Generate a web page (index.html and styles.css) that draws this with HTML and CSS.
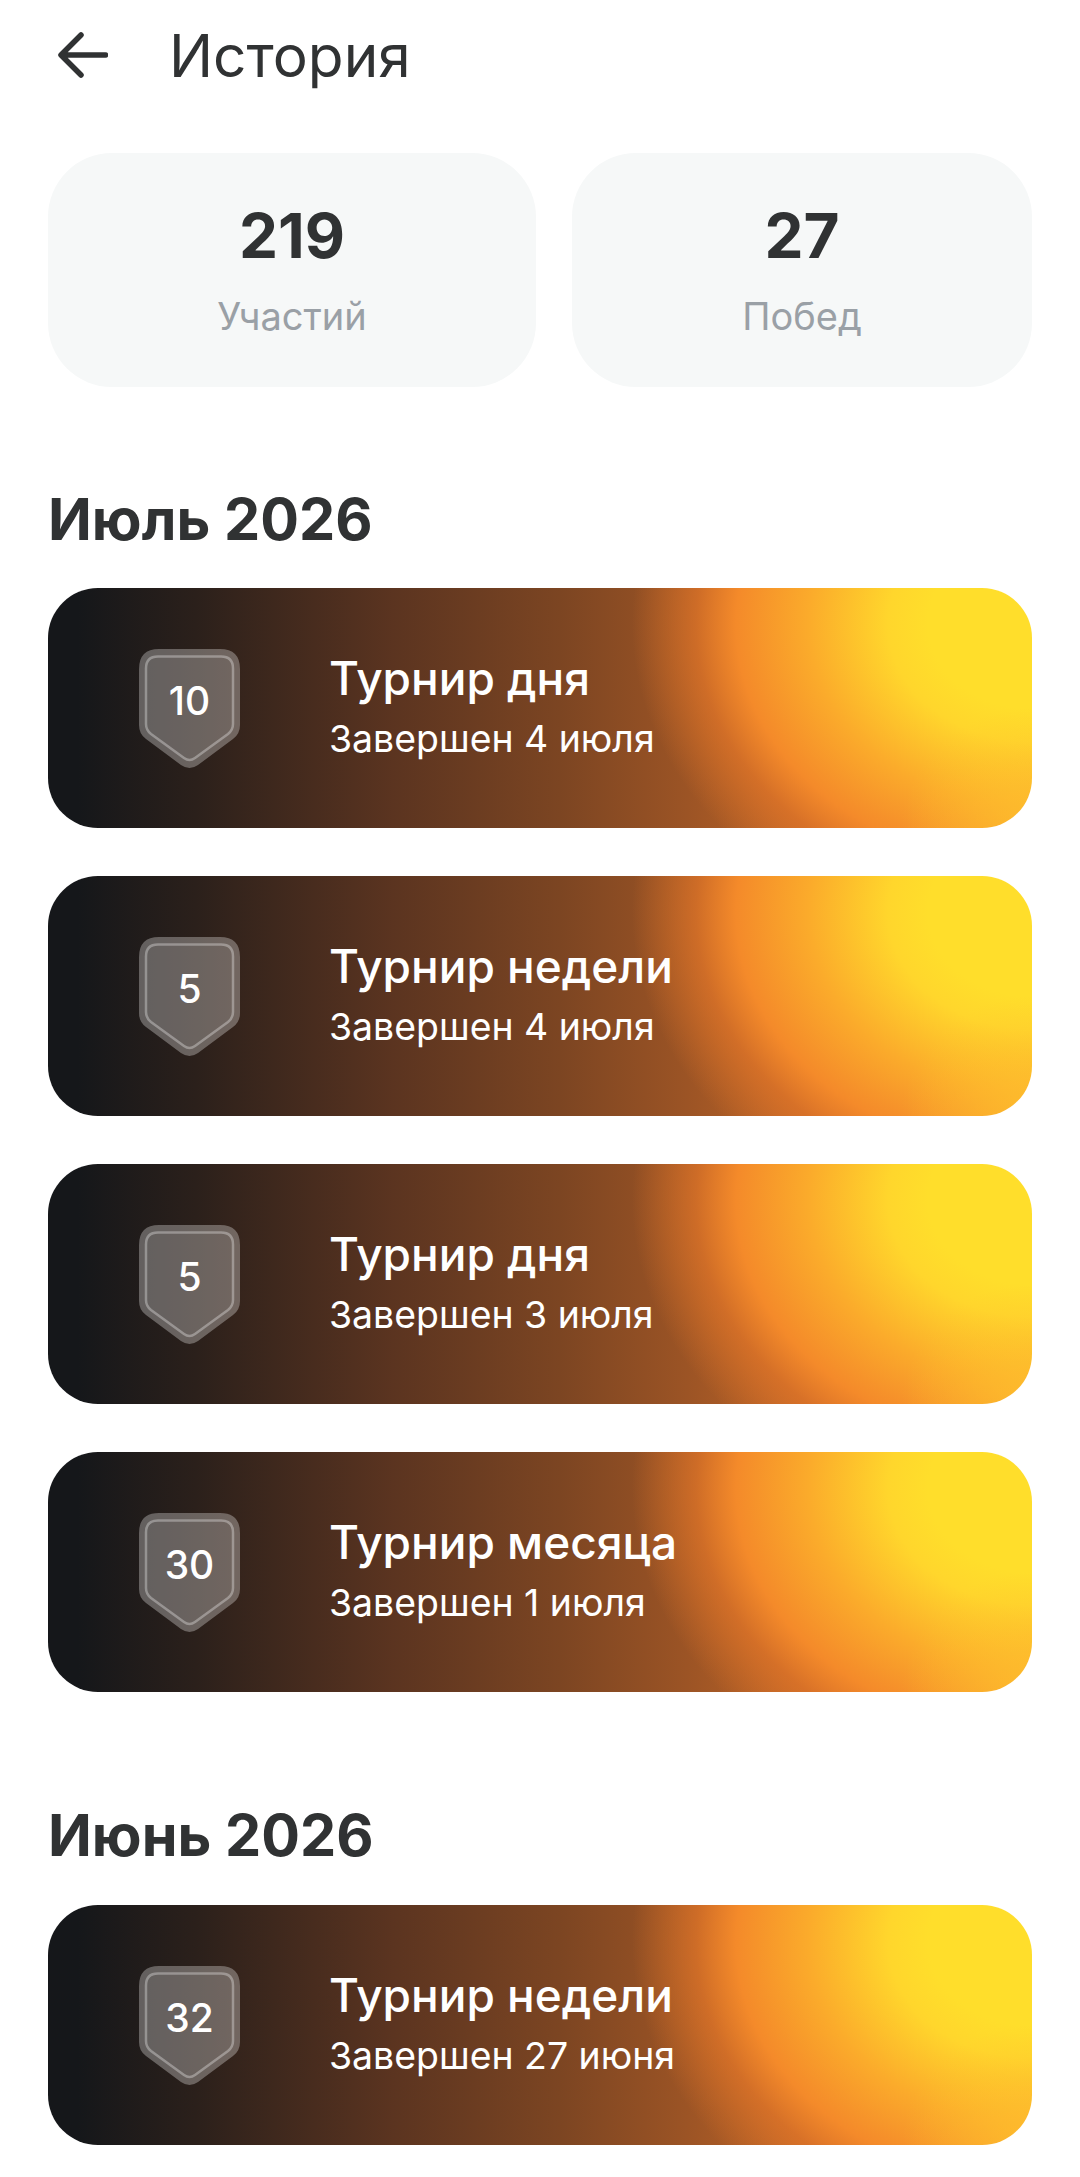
FILE: index.html
```html
<!DOCTYPE html>
<html lang="ru">
<head>
    <meta charset="UTF-8">
    <meta name="viewport" content="width=device-width, initial-scale=1.0">
    <title>История</title>
    <link rel="stylesheet" href="styles.css">
</head>
<body>
    <div class="header">
        <svg class="back" viewBox="0 0 50 46" width="50" height="46">
            <path d="M47.500 23H3.500M23 3 3 23 23 43" fill="none" stroke="#303233" stroke-width="5.500" stroke-linecap="round" stroke-linejoin="round"/>
        </svg>
        <h1 class="title">История</h1>
    </div>

    <div class="stats">
        <div class="stat">
            <div class="stat-num">219</div>
            <div class="stat-label">Участий</div>
        </div>
        <div class="stat">
            <div class="stat-num">27</div>
            <div class="stat-label">Побед</div>
        </div>
    </div>

    <h2 class="month">Июль 2026</h2>
    <div class="list">
        <div class="card">
            <div class="badge">
                <svg viewBox="0 0 101 119" width="101" height="119"><use href="#shield"/></svg>
                <span class="badge-num">10</span>
            </div>
            <div class="info">
                <div class="card-title">Турнир дня</div>
                <div class="card-sub">Завершен 4 июля</div>
            </div>
        </div>
        <div class="card">
            <div class="badge">
                <svg viewBox="0 0 101 119" width="101" height="119"><use href="#shield"/></svg>
                <span class="badge-num">5</span>
            </div>
            <div class="info">
                <div class="card-title">Турнир недели</div>
                <div class="card-sub">Завершен 4 июля</div>
            </div>
        </div>
        <div class="card">
            <div class="badge">
                <svg viewBox="0 0 101 119" width="101" height="119"><use href="#shield"/></svg>
                <span class="badge-num">5</span>
            </div>
            <div class="info">
                <div class="card-title">Турнир дня</div>
                <div class="card-sub">Завершен 3 июля</div>
            </div>
        </div>
        <div class="card">
            <div class="badge">
                <svg viewBox="0 0 101 119" width="101" height="119"><use href="#shield"/></svg>
                <span class="badge-num">30</span>
            </div>
            <div class="info">
                <div class="card-title">Турнир месяца</div>
                <div class="card-sub">Завершен 1 июля</div>
            </div>
        </div>
    </div>

    <h2 class="month month-next">Июнь 2026</h2>
    <div class="list">
        <div class="card">
            <div class="badge">
                <svg viewBox="0 0 101 119" width="101" height="119"><use href="#shield"/></svg>
                <span class="badge-num">32</span>
            </div>
            <div class="info">
                <div class="card-title">Турнир недели</div>
                <div class="card-sub">Завершен 27 июня</div>
            </div>
        </div>
    </div>

    <svg class="defs" width="0" height="0">
        <defs>
            <g id="shield">
                <path d="M20 0H81Q101 0 101 20V76Q101 85 94 90L59 116Q50.500 122 42 116L7 90Q0 85 0 76V20Q0 0 20 0Z" fill="#fff" fill-opacity=".3"/>
                <path d="M19 7.500H82Q94 7.500 94 19.500V75Q94 81 89 85L56 109Q50.500 113 45 109L12 85Q7 81 7 75V19.500Q7 7.500 19 7.500Z" fill="none" stroke="#fff" stroke-opacity=".32" stroke-width="2.500"/>
            </g>
        </defs>
    </svg>
</body>
</html>
```

FILE: styles.css
```css
*{
    margin: 0;
    padding: 0;
    box-sizing: border-box;
}
html, body{
    height: 2177px;
    overflow: hidden;
}
body{
    width: 1080px;
    padding: 0 48px;
    background: #fff;
    color: #303233;
    font-family: Inter, "Noto Sans", sans-serif;
}
.header{
    display: flex;
    align-items: center;
    height: 110px;
    padding-left: 10px;
}
.back{
    flex: none;
}
.title{
    margin-left: 61px;
    font-size: 58.500px;
    font-weight: 400;
}
.stats{
    display: grid;
    grid-template-columns: 488px 460px;
    gap: 36px;
    margin-top: 43px;
}
.stat{
    display: flex;
    flex-direction: column;
    align-items: center;
    height: 234px;
    padding-top: 48px;
    border-radius: 64px;
    background: #f6f8f8;
}
.stat-num{
    height: 70px;
    font-size: 62px;
    line-height: 70px;
    font-weight: 700;
}
.stat-label{
    margin-top: 20px;
    font-size: 38px;
    line-height: 50px;
    color: #9aa0a6;
}
.month{
    height: 70px;
    margin-top: 97px;
    margin-bottom: 34px;
    font-size: 57.500px;
    line-height: 70px;
    font-weight: 700;
}
.month-next{
    margin-top: 108px;
    margin-bottom: 35px;
}
.list{
    display: flex;
    flex-direction: column;
    gap: 48px;
}
.card{
    display: flex;
    align-items: center;
    height: 240px;
    padding-left: 91px;
    border-radius: 50px;
    color: #fff;
    background:
        radial-gradient(ellipse 130px 120px at 100% 100%, rgba(255,195,45,.75) 0%, rgba(255,195,45,0) 100%),
        radial-gradient(ellipse 400px 325px at 100% 15%, #ffde2b 0%, #ffde2b 26%, #ffd62c 36%, #fbab2b 56%, #f48a2a 74%, rgba(226,118,40,.7) 84%, rgba(200,105,38,0) 100%),
        linear-gradient(90deg, #15171a 3%, #2b201b 15%, #5b3420 35%, #7c4522 52%, #9c5425 65%, #c96a28 80%, #e07a2a 100%);
}
.badge{
    position: relative;
    flex: none;
    width: 101px;
    height: 119px;
    margin-top: 1px;
}
.badge-num{
    position: absolute;
    top: 29px;
    left: 0;
    width: 100%;
    text-align: center;
    font-size: 39px;
    line-height: 46px;
    font-weight: 500;
}
.info{
    margin-left: 89px;
    margin-top: -6px;
}
.card-title{
    font-size: 46px;
    line-height: 60px;
    font-weight: 500;
}
.card-sub{
    margin-top: 8px;
    font-size: 37.400px;
    line-height: 46px;
}
.defs{
    position: absolute;
}
```
